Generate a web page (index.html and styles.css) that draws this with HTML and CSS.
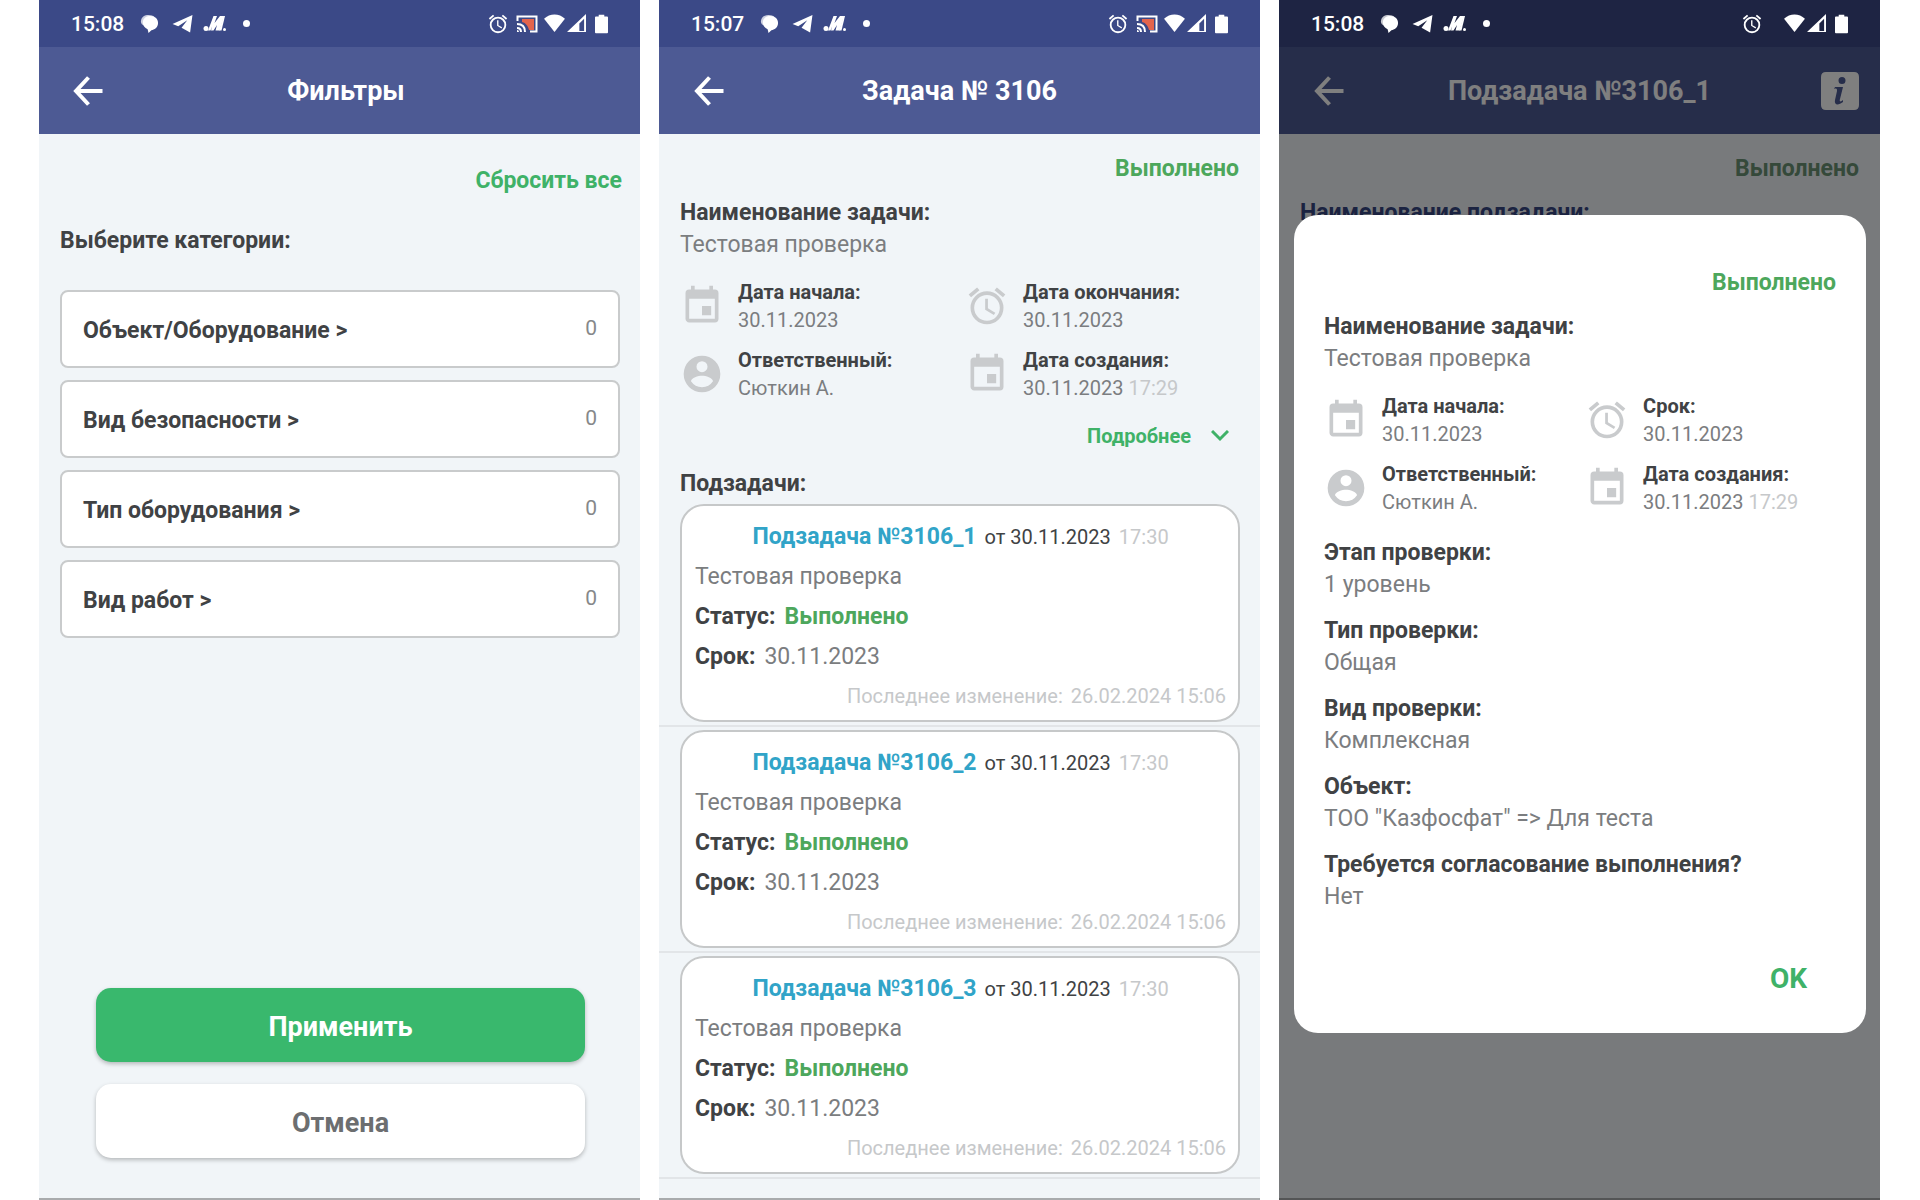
FILE: index.html
```html
<!DOCTYPE html>
<html lang="ru">
<head>
    <meta charset="UTF-8">
    <meta name="viewport" content="width=device-width, initial-scale=1.0">
    <title>Задачи</title>
    <link rel="stylesheet" href="styles.css">
</head>
<body>
    <!-- shared icons -->
    <svg class="sprite" aria-hidden="true">
        <symbol id="i-chat" viewBox="0 0 20 20"><path d="M3 9C3 4 7 2 11 2c5 0 8 3 8 7.500S15 17 12 17l-3 3-1-4C5 15 3 12 3 9z"/><path d="M1 8c0-5 4-7 8-7 3 0 5 1 6 2L4 12Q1 11 1 8z" opacity=".75"/></symbol>
        <symbol id="i-telegram" viewBox="0 0 22 20"><path d="M21.500 1 .5 10.500 6.500 13 16 6.500 10 14.500l9 5z"/></symbol>
        <symbol id="i-m" viewBox="0 0 24 20"><path d="M5 16.500 10.500 2H14l-2.500 7L17 2h4l-4.500 14.500h-4L14 11l-3.500 5.500H8l1-4-1.500 4z"/><circle cx="3" cy="14.500" r="2.500"/><path d="M20.500 2h1.500l-3.500 14.500H16z"/><circle cx="21.500" cy="15.500" r="1.500"/></symbol>
        <symbol id="i-alarm" viewBox="0 0 24 24"><path d="m22 5.720-4.600-3.860-1.290 1.530 4.600 3.860zM7.880 3.390 6.600 1.860 2 5.710l1.290 1.530zM12.500 8H11v6l4.750 2.850.75-1.230-4-2.370zM12 4a9 9 0 1 0 0 18 9 9 0 0 0 0-18zm0 16a7 7 0 1 1 0-14 7 7 0 0 1 0 14z"/></symbol>
        <symbol id="i-cast" viewBox="0 0 22 18"><path d="M6 4h12v11h-5C12 11 10 8 6 7z" fill="#e4644c"/><path d="M1.500 6V1.500h19v15H14M1 9c5 0 8 3 8 8M1 13c3 0 4 1 4 4" fill="none" stroke="currentColor" stroke-width="2"/><path d="M1 15q2 0 2 2H1z"/></symbol>
        <symbol id="i-wifi" viewBox="0 0 22 20"><path d="M0 5C6-1 16-1 22 5L11 19z"/></symbol>
        <symbol id="i-signal" viewBox="0 0 20 20"><path d="M0 19 20 0v19zm13-1h5V5l-5 5z" fill-rule="evenodd"/></symbol>
        <symbol id="i-battery" viewBox="0 0 14 20"><path d="M4 0h6v2h3q1 0 1 1v16q0 1-1 1H1q-1 0-1-1V3q0-1 1-1h3z"/></symbol>
        <symbol id="i-back" viewBox="0 0 30 30"><path d="M29.500 15H3M15.500 1.500 3 15l12.500 13.500" fill="none" stroke="currentColor" stroke-width="4"/></symbol>
        <symbol id="i-event" viewBox="0 0 24 24"><path d="M17 12h-5v5h5zM16 1v2H8V1H6v2H5a2 2 0 0 0-2 2v14c0 1.100.9 2 2 2h14a2 2 0 0 0 2-2V5a2 2 0 0 0-2-2h-1V1zm3 18H5V8h14z"/></symbol>
        <symbol id="i-person" viewBox="0 0 24 24"><path d="M12 2a10 10 0 1 0 0 20 10 10 0 0 0 0-20zm0 3a3 3 0 1 1 0 6 3 3 0 0 1 0-6zm0 14.200a7.200 7.200 0 0 1-6-3.220c.03-1.990 4-3.080 6-3.080s5.970 1.090 6 3.080a7.200 7.200 0 0 1-6 3.220z"/></symbol>
        <symbol id="i-down" viewBox="0 0 18 12"><path d="m1 1 8 8 8-8" fill="none" stroke="currentColor" stroke-width="3"/></symbol>
        <symbol id="i-info" viewBox="0 0 38 38"><path d="M5 0h28q5 0 5 5v28q0 5-5 5H5q-5 0-5-5V5q0-5 5-5zm16 5a3.500 3.500 0 1 0 0 7 3.500 3.500 0 0 0 0-7zm-7 10-1 2c3-1 3 0 3 2l-2 9c-1 5 3 6 8 2v-2c-2 2-4 2-3-1l3-12z" fill-rule="evenodd"/></symbol>
    </svg>

    <section class="screen">
        <div class="status-bar">
            <span class="clock">15:08</span>
            <svg class="s-chat"><use href="#i-chat"/></svg>
            <svg class="s-telegram"><use href="#i-telegram"/></svg>
            <svg class="s-m"><use href="#i-m"/></svg>
            <span class="dot"></span>
            <svg class="s-alarm"><use href="#i-alarm"/></svg>
            <svg class="s-cast"><use href="#i-cast"/></svg>
            <svg class="s-wifi"><use href="#i-wifi"/></svg>
            <svg class="s-signal"><use href="#i-signal"/></svg>
            <svg class="s-battery"><use href="#i-battery"/></svg>
        </div>
        <div class="view">
            <header class="header header-filters">
                <button class="back" aria-label="Назад"><svg><use href="#i-back"/></svg></button>
                <h1>Фильтры</h1>
            </header>
            <main class="filters">
                <button class="reset">Сбросить все</button>
                <h2>Выберите категории:</h2>
                <div class="filter-list">
                    <button class="filter"><b>Объект/Оборудование &gt;</b><span>0</span></button>
                    <button class="filter"><b>Вид безопасности &gt;</b><span>0</span></button>
                    <button class="filter"><b>Тип оборудования &gt;</b><span>0</span></button>
                    <button class="filter"><b>Вид работ &gt;</b><span>0</span></button>
                </div>
                <div class="actions">
                    <button class="btn btn-apply">Применить</button>
                    <button class="btn">Отмена</button>
                </div>
            </main>
        </div>
    </section>

    <section class="screen">
        <div class="status-bar">
            <span class="clock">15:07</span>
            <svg class="s-chat"><use href="#i-chat"/></svg>
            <svg class="s-telegram"><use href="#i-telegram"/></svg>
            <svg class="s-m"><use href="#i-m"/></svg>
            <span class="dot"></span>
            <svg class="s-alarm"><use href="#i-alarm"/></svg>
            <svg class="s-cast"><use href="#i-cast"/></svg>
            <svg class="s-wifi"><use href="#i-wifi"/></svg>
            <svg class="s-signal"><use href="#i-signal"/></svg>
            <svg class="s-battery"><use href="#i-battery"/></svg>
        </div>
        <div class="view">
            <header class="header">
                <button class="back" aria-label="Назад"><svg><use href="#i-back"/></svg></button>
                <h1>Задача № 3106</h1>
            </header>
            <main class="task">
                <p class="state">Выполнено</p>
                <h2>Наименование задачи:</h2>
                <p class="value">Тестовая проверка</p>
                <div class="meta">
                    <div class="meta-item"><svg><use href="#i-event"/></svg><div><b>Дата начала:</b><p>30.11.2023</p></div></div>
                    <div class="meta-item"><svg><use href="#i-alarm"/></svg><div><b>Дата окончания:</b><p>30.11.2023</p></div></div>
                    <div class="meta-item"><svg><use href="#i-person"/></svg><div><b>Ответственный:</b><p>Сюткин А.</p></div></div>
                    <div class="meta-item"><svg><use href="#i-event"/></svg><div><b>Дата создания:</b><p>30.11.2023 <time>17:29</time></p></div></div>
                </div>
                <button class="more">Подробнее <svg><use href="#i-down"/></svg></button>
                <h2 class="sub-title">Подзадачи:</h2>
            </main>
            <ul class="subtasks">
                <li>
                    <article class="card">
                        <p class="card-head"><a href="#">Подзадача №3106_1</a><span>от 30.11.2023</span><time>17:30</time></p>
                        <p class="value">Тестовая проверка</p>
                        <p class="row"><b>Статус:</b><strong>Выполнено</strong></p>
                        <p class="row"><b>Срок:</b><span>30.11.2023</span></p>
                        <p class="changed"><span>Последнее изменение:</span><time>26.02.2024 15:06</time></p>
                    </article>
                </li>
                <li>
                    <article class="card">
                        <p class="card-head"><a href="#">Подзадача №3106_2</a><span>от 30.11.2023</span><time>17:30</time></p>
                        <p class="value">Тестовая проверка</p>
                        <p class="row"><b>Статус:</b><strong>Выполнено</strong></p>
                        <p class="row"><b>Срок:</b><span>30.11.2023</span></p>
                        <p class="changed"><span>Последнее изменение:</span><time>26.02.2024 15:06</time></p>
                    </article>
                </li>
                <li>
                    <article class="card">
                        <p class="card-head"><a href="#">Подзадача №3106_3</a><span>от 30.11.2023</span><time>17:30</time></p>
                        <p class="value">Тестовая проверка</p>
                        <p class="row"><b>Статус:</b><strong>Выполнено</strong></p>
                        <p class="row"><b>Срок:</b><span>30.11.2023</span></p>
                        <p class="changed"><span>Последнее изменение:</span><time>26.02.2024 15:06</time></p>
                    </article>
                </li>
            </ul>
        </div>
    </section>

    <section class="screen">
        <div class="status-bar status-bar-dark">
            <span class="clock">15:08</span>
            <svg class="s-chat"><use href="#i-chat"/></svg>
            <svg class="s-telegram"><use href="#i-telegram"/></svg>
            <svg class="s-m"><use href="#i-m"/></svg>
            <span class="dot"></span>
            <svg class="s-alarm"><use href="#i-alarm"/></svg>
            <svg class="s-wifi"><use href="#i-wifi"/></svg>
            <svg class="s-signal"><use href="#i-signal"/></svg>
            <svg class="s-battery"><use href="#i-battery"/></svg>
        </div>
        <div class="view">
            <header class="header">
                <button class="back" aria-label="Назад"><svg><use href="#i-back"/></svg></button>
                <h1>Подзадача №3106_1</h1>
                <button class="info" aria-label="Информация"><svg><use href="#i-info"/></svg></button>
            </header>
            <main class="task task-behind">
                <p class="state">Выполнено</p>
                <h2>Наименование подзадачи:</h2>
            </main>
            <div class="overlay">
                <div class="modal" role="dialog">
                    <p class="state">Выполнено</p>
                    <h2>Наименование задачи:</h2>
                    <p class="value">Тестовая проверка</p>
                    <div class="meta">
                        <div class="meta-item"><svg><use href="#i-event"/></svg><div><b>Дата начала:</b><p>30.11.2023</p></div></div>
                        <div class="meta-item"><svg><use href="#i-alarm"/></svg><div><b>Срок:</b><p>30.11.2023</p></div></div>
                        <div class="meta-item"><svg><use href="#i-person"/></svg><div><b>Ответственный:</b><p>Сюткин А.</p></div></div>
                        <div class="meta-item"><svg><use href="#i-event"/></svg><div><b>Дата создания:</b><p>30.11.2023 <time>17:29</time></p></div></div>
                    </div>
                    <dl class="details">
                        <div><dt>Этап проверки:</dt><dd>1 уровень</dd></div>
                        <div><dt>Тип проверки:</dt><dd>Общая</dd></div>
                        <div><dt>Вид проверки:</dt><dd>Комплексная</dd></div>
                        <div><dt>Объект:</dt><dd>ТОО "Казфосфат" =&gt; Для теста</dd></div>
                        <div><dt>Требуется согласование выполнения?</dt><dd>Нет</dd></div>
                    </dl>
                    <button class="ok">OK</button>
                </div>
            </div>
        </div>
    </section>
</body>
</html>
```
FILE: styles.css
```css
* {
    box-sizing: border-box;
    margin: 0;
    padding: 0;
}
body {
    display: flex;
    gap: 19px;
    padding: 0 40px 0 39px;
    background: #fff;
    color: #404244;
    font-family: Roboto, "Liberation Sans", sans-serif;
    font-size: 23px;
    line-height: 32px;
}
svg {
    display: block;
    fill: currentColor;
}
button {
    border: none;
    background: none;
    color: inherit;
    font: inherit;
    cursor: pointer;
}
h2 {
    font-size: 23px;
    font-weight: 700;
}
b,
strong {
    font-weight: 700;
}
.sprite {
    position: absolute;
    width: 0;
    height: 0;
}
.screen {
    flex: 1;
    min-width: 0;
    min-height: 100vh;
    display: flex;
    flex-direction: column;
    background: #f1f5f8;
}

/* status bar */
.status-bar {
    height: 47px;
    display: flex;
    align-items: center;
    padding: 0 32px 0 32px;
    background: #3b4987;
    color: #fff;
}
.status-bar-dark {
    background: #1e2443;
}
.clock {
    font-size: 21px;
    font-weight: 500;
    margin-right: 16px;
}
.s-chat {
    width: 19px;
    height: 19px;
    margin-right: 13px;
}
.s-telegram {
    width: 21px;
    height: 19px;
    margin-right: 10px;
}
.s-m {
    width: 24px;
    height: 20px;
    margin-right: 16px;
}
.dot {
    width: 7px;
    height: 7px;
    border-radius: 50%;
    background: #fff;
}
.s-alarm {
    width: 22px;
    height: 22px;
    margin-left: auto;
    margin-right: 7px;
}
.s-cast {
    width: 22px;
    height: 18px;
    margin-right: 5px;
}
.status-bar-dark .s-alarm {
    margin-right: 20px;
}
.s-wifi {
    width: 23px;
    height: 19px;
    margin-right: 1px;
}
.s-signal {
    width: 19px;
    height: 19px;
    margin-right: 9px;
}
.s-battery {
    width: 13px;
    height: 20px;
}

/* header */
.view {
    position: relative;
    flex: 1;
    display: flex;
    flex-direction: column;
    border-bottom: 2px solid #a9abad;
}
.header {
    height: 87px;
    display: grid;
    grid-template-columns: 1fr auto 1fr;
    align-items: center;
    padding: 0 21px;
    background: #4d5a94;
    color: #fff;
}
.header h1 {
    font-size: 27px;
    font-weight: 700;
}
.back {
    justify-self: start;
    margin-left: 14px;
}
.header-filters {
    padding-left: 34px;
}
.header-filters .back {
    margin-left: 0;
}
.back svg {
    width: 30px;
    height: 30px;
}
.info {
    justify-self: end;
}
.info svg {
    width: 38px;
    height: 38px;
}

/* filters */
.filters {
    flex: 1;
    display: flex;
    flex-direction: column;
    padding: 31px 20px 40px 21px;
}
.reset {
    align-self: flex-end;
    margin-right: -2px;
    color: #3fb268;
    font-weight: 700;
}
.filters h2 {
    margin-top: 28px;
}
.filter-list {
    display: flex;
    flex-direction: column;
    gap: 12px;
    margin-top: 33px;
}
.filter {
    height: 78px;
    display: flex;
    align-items: center;
    justify-content: space-between;
    padding: 4px 21px 0;
    border: 2px solid #c9cbcc;
    border-radius: 8px;
    background: #fff;
}
.filter span {
    color: #86888a;
    font-size: 21px;
    padding-bottom: 6px;
}
.actions {
    display: flex;
    flex-direction: column;
    gap: 22px;
    margin: auto 35px 0 36px;
}
.btn {
    height: 74px;
    padding-top: 4px;
    border-radius: 15px;
    background: #fff;
    color: #6c6e70;
    font-size: 27px;
    font-weight: 700;
    box-shadow: 0 2px 4px rgba(0, 0, 0, 0.25);
}
.btn-apply {
    background: #39b86d;
    color: #fff;
}

/* task */
.task {
    padding: 21px 21px 0;
}
.state {
    color: #4da75c;
    font-weight: 700;
    line-height: 28px;
    text-align: right;
    margin-bottom: 14px;
}
.value {
    color: #7b7d80;
}
.meta {
    display: grid;
    grid-template-columns: 51fr 49fr;
    row-gap: 12px;
    margin-top: 17px;
    font-size: 20px;
    line-height: 28px;
}
.meta-item {
    display: flex;
    align-items: center;
    gap: 14px;
    white-space: nowrap;
}
.meta-item svg {
    width: 44px;
    height: 44px;
    color: #c9cbcd;
}
.meta-item p {
    color: #7b7d80;
}
time,
.meta-item time {
    color: #c6c8ca;
}
.more {
    display: flex;
    align-items: center;
    gap: 20px;
    margin: 20px 10px 0 auto;
    color: #3fb268;
    font-size: 20px;
    font-weight: 700;
    line-height: 28px;
}
.more svg {
    width: 18px;
    height: 12px;
}
.sub-title {
    margin-top: 18px;
}

/* subtasks */
.subtasks {
    list-style: none;
    margin-top: 4px;
}
.subtasks li {
    padding: 0 20px 3px 21px;
    border-bottom: 2px solid #e2e5e8;
    margin-bottom: 3px;
}
.card {
    padding: 11px 12px 5px 13px;
    border: 2px solid #c6c8c9;
    border-radius: 24px;
    background: #fff;
    line-height: 40px;
}
.card-head {
    display: flex;
    justify-content: center;
    gap: 8px;
    font-size: 20px;
}
.card-head a {
    color: #31a4c8;
    font-size: 23px;
    font-weight: 700;
    text-decoration: none;
}
.row {
    display: flex;
    gap: 9px;
}
.row span {
    color: #7b7d80;
}
.row strong {
    color: #4da75c;
}
.changed {
    display: flex;
    justify-content: flex-end;
    gap: 8px;
    color: #c6c8ca;
    font-size: 20px;
    line-height: 38px;
}

/* modal */
.task-behind .state {
    color: #6a9274;
}
.task-behind h2 {
    color: #364683;
}
.overlay {
    position: absolute;
    inset: 0 0 -2px;
    display: flex;
    align-items: center;
    padding: 0 14px 0 15px;
    background: rgba(0, 0, 0, 0.5);
}
.modal {
    flex: 1;
    padding: 54px 30px 34px 30px;
    border-radius: 24px;
    background: #fff;
}
.details {
    display: flex;
    flex-direction: column;
    gap: 14px;
    margin-top: 21px;
}
.details dt {
    font-weight: 700;
}
.details dd {
    color: #7b7d80;
}
.ok {
    display: block;
    margin: 46px 29px 0 auto;
    color: #3fb268;
    font-size: 28px;
    font-weight: 700;
    line-height: 40px;
}
```
